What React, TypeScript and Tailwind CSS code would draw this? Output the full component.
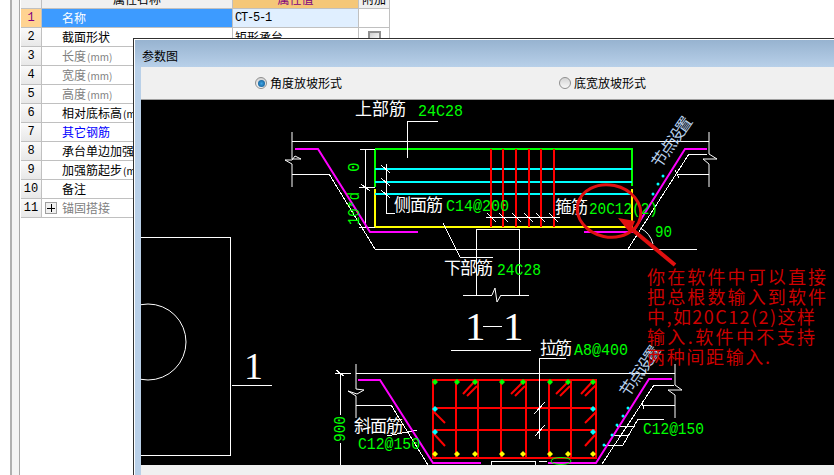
const rows = [
  { name: "名称", value: "CT-5-1", tone: "selected" },
  { name: "截面形状", value: "矩形承台", tone: "normal", check: true },
  { name: "长度", unit: "(mm)", tone: "muted" },
  { name: "宽度", unit: "(mm)", tone: "muted" },
  { name: "高度", unit: "(mm)", tone: "muted" },
  { name: "相对底标高", unit: "(mm)", tone: "normal" },
  { name: "其它钢筋", tone: "link" },
  { name: "承台单边加强筋", unit: "(mm)", tone: "normal" },
  { name: "加强筋起步", unit: "(mm)", tone: "normal" },
  { name: "备注", tone: "normal" },
  { name: "锚固搭接", tone: "muted", plus: true },
];

type Seg = [number, number, number, number];

// [x1, y1, x2, y2] in page pixels; the svg viewBox starts at the canvas corner
const whiteLines: Seg[] = [
  [292, 140, 709, 140], [375, 248, 697, 248], [292, 173, 329, 173], [329, 173, 375, 248],
  [407, 120, 438, 120], [407, 120, 407, 157], [365, 148, 365, 226], [360, 148, 375, 148],
  [359, 186, 375, 186], [359, 226, 375, 226], [386, 163, 386, 212], [386, 212, 395, 212],
  [381, 164, 390, 172], [381, 177, 390, 185], [381, 189, 390, 197], [361, 183, 370, 190],
  [486, 216, 560, 216], [487, 212, 496, 221], [499, 212, 508, 221], [512, 212, 521, 221],
  [524, 212, 533, 221], [536, 212, 545, 221], [549, 212, 558, 221],
  [443, 222, 460, 256], [460, 256, 493, 256], [476, 228, 519, 228], [476, 228, 476, 294],
  [519, 228, 519, 294], [463, 294, 492, 294], [501, 294, 529, 294],
  [451, 349, 531, 349], [483, 325, 502, 325], [232, 384, 272, 384],
  [689, 153, 707, 153], [689, 153, 628, 248], [677, 173, 709, 173], [675, 169, 679, 177],
  [356, 372, 675, 372], [335, 372, 351, 372], [340, 372, 340, 414], [340, 442, 340, 464],
  [336, 369, 344, 375], [356, 404, 391, 404], [391, 404, 428, 464],
  [387, 435, 417, 429], [539, 357, 566, 357], [539, 357, 539, 438],
  [534, 413, 545, 401], [535, 435, 545, 424], [491, 460, 535, 460], [491, 460, 491, 464],
  [535, 460, 535, 464], [539, 460, 547, 460], [602, 463, 654, 384], [654, 384, 674, 384],
  [642, 404, 675, 404], [638, 418, 664, 418], [638, 418, 623, 444], [617, 425, 635, 425],
  [612, 434, 629, 434], [605, 444, 623, 444], [642, 400, 644, 408],
];

const whitePaths = [
  "M292 131V158L301 158L295 155L292 159H285L292 163V186",
  "M709 131V153L717 158H703L709 163V186",
  "M356 363V388L364 389L357 393L348 390L356 395V417",
  "M675 363V384L682 389H668L675 394V417",
  "M492 294L495 287L497 301L501 294",
  "M640 227A24 24 0 0 1 653 243",
];

const rebarX = [491, 503, 516, 529, 541, 554];
const cageX = [456, 478, 501, 526, 549, 571];
const cageDots = [435, 457, 475, 502, 523, 550, 568, 593];
const rebarHooks: Seg[] = [
  [463, 393, 475, 380], [467, 395, 477, 385], [511, 393, 522, 382], [515, 395, 525, 385],
  [556, 393, 567, 382], [560, 395, 570, 385], [581, 393, 593, 380], [585, 395, 596, 384],
  [434, 411, 445, 422], [434, 433, 445, 445], [596, 411, 585, 422], [595, 434, 585, 445],
];
const slopeDots = [[663, 175], [658, 183], [653, 193], [628, 407], [623, 415], [617, 424], [612, 434], [604, 444]];

const cadFont = "font-['Noto_Sans_CJK_SC',sans-serif]";
const monoFont = "font-['Liberation_Mono',monospace]";
const serifFont = "font-['Liberation_Serif',serif]";

function CadLabel({ x, y, width, children }: { x: number; y: number; width: number; children: string }) {
  return (
    <text x={x} y={y} fontSize={17} fill="#ffffff" textLength={width} className={cadFont}>
      {children}
    </text>
  );
}

function CadValue({ x, y, width, children }: { x: number; y: number; width: number; children: string }) {
  return (
    <text x={x} y={y} fontSize={17} fill="#00ff00" textLength={width} lengthAdjust="spacingAndGlyphs" className={monoFont}>
      {children}
    </text>
  );
}

function Drawing() {
  return (
    <svg viewBox="141 99 693 365" className="block h-[365px] w-full bg-black" fill="none">
      <g shapeRendering="crispEdges">
        <rect x="130" y="236.5" width="100.5" height="218" stroke="#fff" />
        <path d="M375 148H632V185" stroke="#00ff00" strokeWidth="2" />
        <path d="M375 148V186" stroke="#00ff00" strokeWidth="2" />
        <path d="M375 188V226H632V188" stroke="#ffff00" strokeWidth="2" />
        {[168, 181, 193].map((y) => (
          <path key={y} d={`M375 ${y}H632`} stroke="#00ffff" strokeWidth="2" />
        ))}
        {rebarX.map((x) => (
          <path key={x} d={`M${x} 148V226`} stroke="#ff0000" strokeWidth="2" />
        ))}
        <rect x="433" y="379" width="163" height="78" stroke="#ff0000" strokeWidth="2" />
        {cageX.map((x) => (
          <path key={x} d={`M${x} 379V457`} stroke="#ff0000" strokeWidth="2" />
        ))}
        <path d="M433 407H596M433 429H596" stroke="#ff0000" strokeWidth="2" />
      </g>

      <circle cx="148" cy="341" r="38" stroke="#fff" />
      {whiteLines.map(([x1, y1, x2, y2], i) => (
        <line key={i} x1={x1} y1={y1} x2={x2} y2={y2} stroke="#fff" shapeRendering="crispEdges" />
      ))}
      {whitePaths.map((d) => (
        <path key={d} d={d} stroke="#fff" />
      ))}

      <path d="M295 148H318L370 231H418" stroke="#ff00ff" strokeWidth="2" />
      <path d="M584 231H633L685 148H707" stroke="#ff00ff" strokeWidth="2" />
      <path d="M358 379H380L433 462H481" stroke="#ff00ff" strokeWidth="2" />
      <path d="M548 462H596L649 378H672" stroke="#ff00ff" strokeWidth="2" />
      <ellipse cx="561" cy="460" rx="10" ry="3.5" stroke="#00ff00" />

      {rebarHooks.map(([x1, y1, x2, y2], i) => (
        <line key={i} x1={x1} y1={y1} x2={x2} y2={y2} stroke="#ff0000" strokeWidth="2" />
      ))}
      {cageDots.map((x) => (
        <g key={x}>
          <path d={`M${x} 378L${x + 3} 381L${x} 384L${x - 3} 381Z`} fill="#00ff00" />
          <path d={`M${x} 450L${x + 3} 453L${x} 456L${x - 3} 453Z`} fill="#ffff00" />
        </g>
      ))}
      {[[435, 408], [593, 408], [435, 431], [593, 431]].map(([x, y]) => (
        <path key={`${x}-${y}`} d={`M${x} ${y - 3}L${x + 3} ${y}L${x} ${y + 3}L${x - 3} ${y}Z`} fill="#00ffff" />
      ))}
      {slopeDots.map(([x, y]) => (
        <circle key={`${x}-${y}`} cx={x} cy={y} r="1.5" fill="#00ffff" />
      ))}

      <CadLabel x={355} y={114} width={51}>上部筋</CadLabel>
      <CadValue x={418} y={115} width={45}>24C28</CadValue>
      <CadLabel x={394} y={210} width={49}>侧面筋</CadLabel>
      <CadValue x={446} y={210} width={63}>C14@200</CadValue>
      <CadLabel x={555} y={212} width={33}>箍筋</CadLabel>
      <CadValue x={589} y={213} width={69}>20C12(2)</CadValue>
      <CadValue x={655} y={236} width={17}>90</CadValue>
      <CadLabel x={444} y={273} width={49}>下部筋</CadLabel>
      <CadValue x={497} y={274} width={44}>24C28</CadValue>
      <CadLabel x={540} y={353} width={32}>拉筋</CadLabel>
      <CadValue x={574} y={354} width={54}>A8@400</CadValue>
      <CadLabel x={354} y={431} width={49}>斜面筋</CadLabel>
      <CadValue x={358} y={448} width={62}>C12@150</CadValue>
      <CadValue x={643} y={433} width={61}>C12@150</CadValue>

      <text transform="translate(359 171) rotate(-90)" fontSize={16} fill="#00ff00" className={monoFont}>0</text>
      <text transform="translate(359 224) rotate(-90)" fontSize={16} fill="#00ff00" textLength={33} lengthAdjust="spacingAndGlyphs" className={monoFont}>10*d</text>
      <text transform="translate(345 441) rotate(-90)" fontSize={16} fill="#00ff00" textLength={26} lengthAdjust="spacingAndGlyphs" className={monoFont}>900</text>

      <text x={465} y={339} fontSize={41} fill="#fff" className={serifFont}>1</text>
      <text x={503} y={339} fontSize={41} fill="#fff" className={serifFont}>1</text>
      <text x={244} y={378} fontSize={38} fill="#fff" className={serifFont}>1</text>

      <text transform="translate(660 168) rotate(-55)" fontSize={16} fill="#b9d2ee" textLength={58} className={cadFont}>节点设置</text>
      <text transform="translate(628 397) rotate(-55)" fontSize={16} fill="#b9d2ee" textLength={58} className={cadFont}>节点设置</text>

      <ellipse cx="609" cy="210" rx="32" ry="26" stroke="#e01010" strokeWidth="3" transform="rotate(12 609 210)" />
      <path d="M628 225L675 264" stroke="#e01010" strokeWidth="4" />
      <path d="M618 217L635 220L630 232Z" fill="#e01010" />

      <g fill="#cc0000" fontSize={18} className={cadFont}>
        <text x={647} y={283} textLength={179}>你在软件中可以直接</text>
        <text x={647} y={303} textLength={179}>把总根数输入到软件</text>
        <text x={647} y={323} textLength={168}>中,如20C12(2)这样</text>
        <text x={647} y={343} textLength={168}>输入.软件中不支持</text>
        <text x={647} y={363} textLength={123}>两种间距输入.</text>
      </g>
    </svg>
  );
}

function Radio({ checked, label }: { checked?: boolean; label: string }) {
  return (
    <div className="flex items-center gap-[3px] text-[12px] text-black">
      <span className="flex h-[12px] w-[12px] items-center justify-center rounded-full border border-[#8f8f8f] bg-gradient-to-b from-[#d4d4d4] to-[#f8f8f8]">
        {checked && <span className="h-[7px] w-[7px] rounded-full bg-[radial-gradient(circle,#3fa5e6,#0a4f86)]" />}
      </span>
      <span>{label}</span>
    </div>
  );
}

function PropertyRow({ row, index }: { row: (typeof rows)[number]; index: number }) {
  const selected = row.tone === "selected";
  const color =
    row.tone === "muted" ? "text-[#808080]" : row.tone === "link" ? "text-[#0000ff]" : selected ? "text-white" : "text-black";
  return (
    <div className="flex h-[19px] border-b border-[#c0c0c0]">
      <div
        className={`flex w-[21px] shrink-0 items-center justify-center border-r border-[#c0c0c0] text-[12px] font-['Liberation_Mono',monospace] ${
          selected ? "bg-[#ffd391] text-[#800080]" : "bg-gradient-to-b from-[#fafafa] to-[#e8e8e8] text-black"
        }`}
      >
        {index + 1}
      </div>
      <div
        className={`relative flex w-[191px] shrink-0 items-center overflow-hidden whitespace-nowrap border-r border-[#c0c0c0] pl-[20px] ${color} ${
          selected ? "bg-[#3d9bff]" : ""
        }`}
      >
        {row.plus && (
          <span className="absolute left-[3px] top-[3px] flex h-[12px] w-[12px] items-center justify-center border border-[#a0a0a0] bg-[#f0f0f0]">
            <svg viewBox="0 0 8 8" className="h-[8px] w-[8px]">
              <path d="M0 4H8M4 0V8" stroke="#000" shapeRendering="crispEdges" />
            </svg>
          </span>
        )}
        {row.name}
        {row.unit && <span className="ml-[1px] text-[10px]">{row.unit}</span>}
      </div>
      <div
        className={`flex w-[126px] shrink-0 items-center overflow-hidden whitespace-nowrap border-r border-[#c0c0c0] pl-[2px] text-black ${
          selected ? "bg-[#e0efff] font-['Liberation_Mono',monospace] tracking-[-1.2px]" : ""
        }`}
      >
        {row.value}
      </div>
      <div className="flex w-[31px] shrink-0 items-center justify-center border-r border-[#c0c0c0]">
        {row.check && <span className="h-[13px] w-[13px] border-2 border-[#909090] bg-gradient-to-br from-[#d0d0d0] to-[#ffffff]" />}
      </div>
    </div>
  );
}

export default function App() {
  return (
    <div className="relative flex h-[475px] w-[834px] overflow-hidden bg-white text-[12px] font-['Noto_Sans_CJK_SC',sans-serif]">
      <div className="flex w-[21px] shrink-0">
        <div className="w-[10px]" />
        <div className="w-[2px] bg-[#b0b0b0]" />
        <div className="w-[7px] bg-[#f4f4f4]" />
        <div className="w-[1px] bg-[#a8a8a8]" />
      </div>

      <div className="w-[369px]">
        <div className="-mt-[10px] flex h-[19px] border-b border-[#c0c0c0] leading-none">
          <div className="w-[21px] border-r border-[#c0c0c0] bg-[#f0f0f0]" />
          <div className="flex w-[191px] items-center justify-center border-r border-[#c0c0c0] bg-[#f0f0f0] text-black">属性名称</div>
          <div className="flex w-[126px] items-center justify-center border-r border-[#c0c0c0] bg-[#f5c778] text-[#800080]">属性值</div>
          <div className="flex w-[31px] items-center justify-center border-r border-[#c0c0c0] bg-[#f0f0f0] text-black">附加</div>
        </div>
        {rows.map((row, i) => (
          <PropertyRow key={row.name} row={row} index={i} />
        ))}
      </div>

      <div className="absolute bottom-0 left-[133px] right-0 top-[38px] flex flex-col border-l border-t border-[#303030]">
        <div className="flex h-[28px] shrink-0 items-center border-l border-t border-white bg-gradient-to-b from-[#97b3d0] to-[#b8d0e9] pl-[7px] pt-[4px] text-[12px] text-black">
          参数图
        </div>
        <div className="flex min-h-0 flex-1 flex-col border-l border-white bg-[#f0f0f0] pl-[6px] [background-image:linear-gradient(to_right,#b9d0e8_6px,transparent_6px)]">
          <div className="flex h-[33px] shrink-0 items-center border-b border-[#a0a0a0] pl-[114px]">
            <div className="w-[304px]">
              <Radio checked label="角度放坡形式" />
            </div>
            <Radio label="底宽放坡形式" />
          </div>
          <Drawing />
        </div>
      </div>
    </div>
  );
}
